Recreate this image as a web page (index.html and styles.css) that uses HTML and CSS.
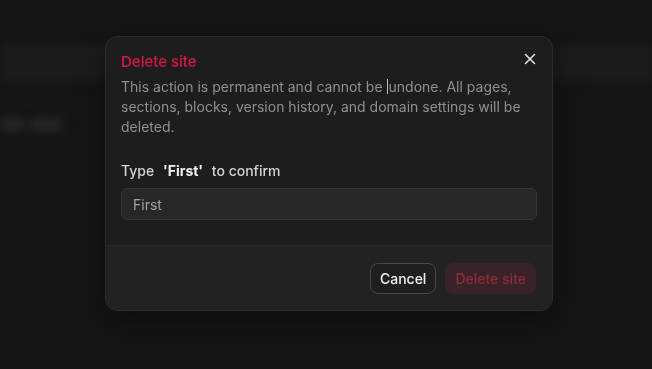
FILE: index.html
```html
<!DOCTYPE html>
<html>

<head>
    <meta charset="utf-8">
    <title>Delete site</title>
    <meta name="viewport" content="width=device-width, initial-scale=1">
    <link rel="stylesheet" href="styles.css">
</head>

<body>
    <div class="page">
        <div class="topbar"></div>
        <div class="ghost-row">
            <span class="ghost ghost-a"></span>
            <span class="ghost ghost-b"></span>
        </div>
    </div>

    <div class="overlay">
        <section class="modal">
            <div class="modal-body">
                <div class="modal-head">
                    <h2 class="modal-title">Delete site</h2>
                    <button class="close-btn" aria-label="Close">
                        <svg width="12" height="12" viewBox="0 0 12 12">
                            <path d="M1.5 1.5 L10.5 10.5 M10.5 1.5 L1.5 10.5" stroke="#e8e8e8" stroke-width="1.5" stroke-linecap="round" />
                        </svg>
                    </button>
                </div>
                <p class="modal-desc">This action is permanent and cannot be <span class="caret"></span>undone. All pages, sections, blocks, version history, and domain settings will be deleted.</p>
                <label class="confirm-label">Type <b>'First'</b> to confirm</label>
                <input class="confirm-input" type="text" value="First">
            </div>
            <div class="modal-foot">
                <button class="btn btn-cancel">Cancel</button>
                <button class="btn btn-danger" disabled>Delete site</button>
            </div>
        </section>
    </div>
</body>

</html>
```

FILE: styles.css
```css
* {
    box-sizing: border-box;
}

body {
    margin: 0;
    width: 652px;
    height: 369px;
    overflow: hidden;
    background-color: #151515;
    font-family: Inter, "Noto Sans", sans-serif;
}

.page {
    padding-top: 44px;
}

.topbar {
    height: 38px;
    background-color: #1b1b1b;
    filter: blur(3px);
}

.ghost-row {
    display: flex;
    gap: 3px;
    margin-top: 36px;
}

.ghost {
    height: 13px;
    border-radius: 6px;
    background-color: #262626;
    filter: blur(4px);
}

.ghost-a {
    width: 26px;
}

.ghost-b {
    width: 34px;
}

.overlay {
    position: fixed;
    inset: 0;
    display: flex;
    justify-content: center;
    align-items: flex-start;
    padding-top: 36px;
    padding-left: 6px;
}

.modal {
    width: 448px;
    border: 1px solid #2c2c2c;
    border-radius: 12px;
    background-color: #1d1d1d;
    overflow: hidden;
    box-shadow: 0 10px 30px rgba(0, 0, 0, 0.4);
}

.modal-body {
    padding: 15px 15px 25px;
}

.modal-head {
    display: flex;
    align-items: center;
    justify-content: space-between;
    height: 20px;
}

.modal-title {
    margin: 0;
    font-size: 15px;
    font-weight: 500;
    line-height: 20px;
    color: #dc1548;
}

.close-btn {
    display: flex;
    padding: 0;
    margin-top: -6px;
    margin-right: 1px;
    border: none;
    background: none;
}

.modal-desc {
    margin: 5px 0 0;
    font-size: 14px;
    line-height: 20px;
    color: #909090;
}

.caret {
    display: inline-block;
    width: 1px;
    height: 15px;
    margin-right: 1px;
    vertical-align: -2px;
    background-color: #bdbdbd;
}

.confirm-label {
    display: block;
    margin-top: 24px;
    font-size: 14px;
    line-height: 20px;
    font-weight: 500;
    color: #d2d2d2;
}

.confirm-label b {
    margin: 0 5px;
    font-weight: 700;
    color: #f2f2f2;
}

.confirm-input {
    display: block;
    width: 100%;
    height: 32px;
    margin-top: 7px;
    padding: 0 11px;
    border: 1px solid #353535;
    border-radius: 6px;
    background-color: #272727;
    font-family: inherit;
    font-size: 14px;
    color: #a2a2a2;
    outline: none;
}

.modal-foot {
    display: flex;
    justify-content: flex-end;
    gap: 9px;
    padding: 17px 16px 16px;
    border-top: 1px solid #262626;
    background-color: #222222;
}

.btn {
    height: 31px;
    padding: 0 9px;
    border-radius: 8px;
    font-family: inherit;
    font-size: 14px;
    font-weight: 500;
}

.btn-cancel {
    border: 1px solid #484848;
    background-color: #1f1f1f;
    color: #f0f0f0;
}

.btn-danger {
    border: 1px solid transparent;
    background-color: #3a2327;
    color: #8f2a3e;
}
```
